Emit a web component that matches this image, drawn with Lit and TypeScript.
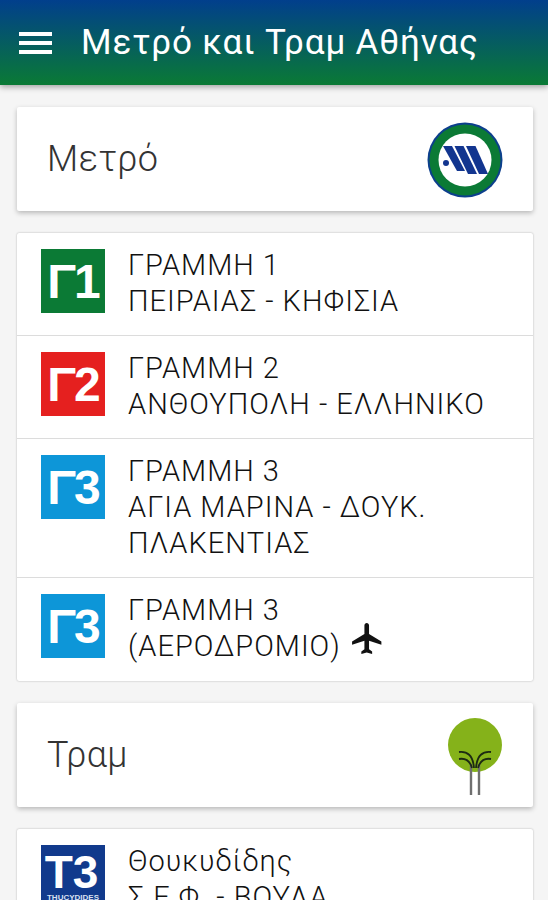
import { LitElement, css, html, svg } from 'lit'
import { customElement } from 'lit/decorators.js'

interface Line {
   badge: string
   color: string
   title: string
   route: string
   plane?: boolean
}

const metroLines: Line[] = [
   { badge: 'Γ1', color: '#0b7a35', title: 'ΓΡΑΜΜΗ 1', route: 'ΠΕΙΡΑΙΑΣ - ΚΗΦΙΣΙΑ' },
   { badge: 'Γ2', color: '#e5201f', title: 'ΓΡΑΜΜΗ 2', route: 'ΑΝΘΟΥΠΟΛΗ - ΕΛΛΗΝΙΚΟ' },
   { badge: 'Γ3', color: '#0d96d8', title: 'ΓΡΑΜΜΗ 3', route: 'ΑΓΙΑ ΜΑΡΙΝΑ - ΔΟΥΚ. ΠΛΑΚΕΝΤΙΑΣ' },
   { badge: 'Γ3', color: '#0d96d8', title: 'ΓΡΑΜΜΗ 3', route: '(ΑΕΡΟΔΡΟΜΙΟ)', plane: true },
]

const metroLogo = svg`
   <circle cx="38" cy="38" r="37.5" fill="#0c3f8c"/>
   <circle cx="38" cy="38" r="35.5" fill="#0b7a35"/>
   <circle cx="38" cy="38" r="26.5" fill="#fff"/>
   <circle cx="19" cy="41" r="3" fill="#12358f"/>
   <g fill="#12358f">
      <polygon points="16,24 25,24 38,49 30,49"/>
      <polygon points="27.5,24 36.5,24 50,52 41,52"/>
      <polygon points="39,24 48.5,24 61,52 52,52"/>
   </g>`

const tramLogo = svg`
   <circle cx="28" cy="27" r="27" fill="#85b21a"/>
   <path d="M24 46v31M32 46v31" fill="none" stroke="#6f6f6f" stroke-width="2.4"/>
   <g fill="none" stroke="#1c2a12" stroke-width="1.8">
      <path d="M12 34c8-1 14 3 15 16M44 34c-8-1-14 3-15 16"/>
      <path d="M12 41c6-1 11 2 13 9M44 41c-6-1-11 2-13 9"/>
   </g>`

@customElement('app-root')
export class AppRoot extends LitElement {

   static styles = css`
      :host {
         display: block;
         height: 900px;
         overflow: hidden;
         background: #f5f5f5;
         font-family: Roboto, "Noto Sans", sans-serif;
         color: #111;
      }

      .appbar {
         height: 85px;
         display: flex;
         align-items: center;
         gap: 29px;
         padding-left: 19px;
         background: linear-gradient(#013f8c, #0a7a35);
         box-shadow: 0 2px 6px rgba(0, 0, 0, 0.35);
         color: #fff;
      }

      .menu {
         width: 33px;
         display: flex;
         flex-direction: column;
         gap: 5px;
      }

      .menu span {
         height: 4px;
         background: #fff;
      }

      .title {
         font-size: 35px;
         line-height: 40px;
         letter-spacing: 0.85px;
      }

      .content {
         display: flex;
         flex-direction: column;
         gap: 22px;
         padding: 22px 15px 0 17px;
      }

      .card {
         background: #fff;
         border-radius: 2px;
         box-shadow: 0 2px 5px rgba(0, 0, 0, 0.25);
      }

      .header {
         height: 104px;
         display: flex;
         align-items: center;
         justify-content: space-between;
         padding: 0 30px;
      }

      .header-name {
         font-size: 36px;
         font-weight: 300;
         letter-spacing: 0.4px;
         color: #333;
      }

      .metro-logo {
         margin-top: 1px;
      }

      .tram-logo {
         margin-top: 3px;
      }

      .list {
         box-shadow: 0 0 2px rgba(0, 0, 0, 0.3);
      }

      .row {
         display: flex;
         gap: 23px;
         padding: 16px 24px;
         border-bottom: 1px solid #dcdcdc;
      }

      .row:last-child {
         border-bottom-color: transparent;
      }

      .badge {
         flex: none;
         width: 64px;
         height: 64px;
         display: flex;
         align-items: center;
         justify-content: center;
         color: #fff;
         font-family: "Liberation Sans", sans-serif;
         font-weight: 700;
         font-size: 48px;
         letter-spacing: -2px;
      }

      .text {
         font-size: 29px;
         font-weight: 300;
         line-height: 36px;
         letter-spacing: 1px;
         margin-top: -2px;
      }

      .route {
         display: flex;
      }

      .plane {
         width: 37px;
         height: 37px;
         margin: -8px 0 0 8px;
         fill: #111;
      }

      .t3 {
         background: #113a8c;
         flex-direction: column;
         font-size: 46px;
         line-height: 42px;
         letter-spacing: 0;
      }

      .t3 span {
         margin-right: 3px;
      }

      .t3 small {
         font-size: 8px;
         line-height: 10px;
         color: #d8e0f0;
      }
   `

   renderLine(line: Line) {
      return html`
         <div class="row">
            <div class="badge" style="background: ${line.color}">${line.badge}</div>
            <div class="text">
               <div>${line.title}</div>
               <div class=${line.plane ? 'route' : ''}>${line.route}${line.plane
                  ? html`<svg class="plane" viewBox="0 0 24 24"><path d="M21 16v-2l-8-5V3.5c0-.83-.67-1.5-1.5-1.5S10 2.67 10 3.5V9l-8 5v2l8-2.5V19l-2 1.5V22l3.5-1 3.5 1v-1.5L13 19v-5.5l8 2.5z"/></svg>`
                  : ''}</div>
            </div>
         </div>
      `
   }

   render() {
      return html`
         <div class="appbar">
            <div class="menu"><span></span><span></span><span></span></div>
            <div class="title">Μετρό και Τραμ Αθήνας</div>
         </div>
         <div class="content">
            <div class="card header">
               <div class="header-name">Μετρό</div>
               <svg class="metro-logo" width="76" height="76" viewBox="0 0 76 76">${metroLogo}</svg>
            </div>
            <div class="card list">
               ${metroLines.map((line) => this.renderLine(line))}
            </div>
            <div class="card header">
               <div class="header-name">Τραμ</div>
               <svg class="tram-logo" width="56" height="78" viewBox="0 0 56 78">${tramLogo}</svg>
            </div>
            <div class="card list">
               <div class="row">
                  <div class="badge t3"><span>T3</span><small>THUCYDIDES</small></div>
                  <div class="text">
                     <div>Θουκυδίδης</div>
                     <div>Σ.Ε.Φ. - ΒΟΥΛΑ</div>
                  </div>
               </div>
            </div>
         </div>
      `
   }
}
